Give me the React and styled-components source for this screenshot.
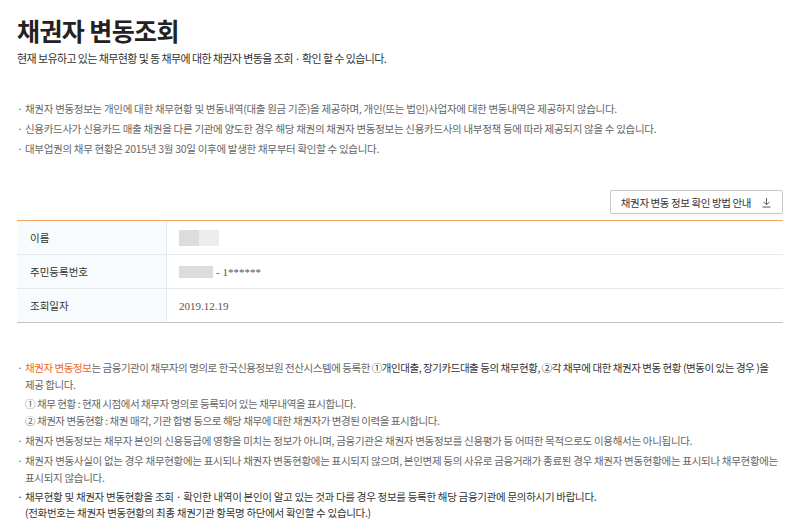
import React from "react";
import styled, { createGlobalStyle } from "styled-components";

const GlobalStyle = createGlobalStyle`
  body {
    margin: 0;
    background: #fff;
    font-family: "Noto Sans CJK KR", "Noto Sans", sans-serif;
    color: #333;
  }
  ul { margin: 0; padding: 0; list-style: none; }
`;

const Page = styled.div`
  padding: 14px 17px 0;
`;
const Title = styled.h2`
  margin: 0;
  font-size: 25px;
  font-weight: 700;
  color: #222;
  line-height: 32px;
  letter-spacing: -0.6px;
`;
const Lead = styled.p`
  margin: 4px 0 0;
  font-size: 11px;
  line-height: 16px;
  color: #333;
  letter-spacing: -0.6px;
`;
const NoteList = styled.ul`
  margin-top: ${(p) => p.$top || 0}px;
`;
const Note = styled.li`
  position: relative;
  padding-left: 8px;
  font-size: 10.5px;
  line-height: ${(p) => p.$lh || 16}px;
  margin-bottom: ${(p) => p.$gap ?? 4}px;
  color: ${(p) => (p.$strong ? "#333" : "#666")};
  letter-spacing: ${(p) => (p.$tight ? -0.45 : -0.3)}px;
  &::before {
    content: "·";
    position: absolute;
    left: 0;
    top: 0;
  }
`;
const Sub = styled.div`
  margin-top: ${(p) => p.$top || 0}px;
  color: #666;
`;
const Em = styled.span`
  color: ${(p) => (p.$orange ? "#ec6a2c" : "#333")};
`;

const Toolbar = styled.div`
  display: flex;
  justify-content: flex-end;
  margin-top: 33px;
`;
const GuideButton = styled.button`
  display: flex;
  align-items: center;
  gap: 10px;
  height: 24px;
  padding: 0 10px;
  background: #fff;
  border: 1px solid #c8c8c8;
  border-radius: 2px;
  font-family: inherit;
  font-size: 10.5px;
  color: #333;
  letter-spacing: -0.4px;
  cursor: pointer;
`;

const Table = styled.div`
  margin-top: 6px;
  border-top: 1px solid #f0a766;
  border-bottom: 1px solid #c4c4c4;
`;
const Row = styled.div`
  display: grid;
  grid-template-columns: 150px 1fr;
  height: 33px;
  & + & {
    border-top: 1px solid #e6e9ec;
  }
`;
const Label = styled.div`
  display: flex;
  align-items: center;
  padding-left: 13px;
  background: #f8fbfd;
  border-right: 1px solid #e6e9ec;
  font-size: 10.5px;
  color: #333;
`;
const Value = styled.div`
  display: flex;
  align-items: center;
  gap: 3px;
  padding-left: 12px;
  font-family: "Liberation Serif", serif;
  font-size: 11px;
  color: #555;
`;
const Blur = styled.span`
  display: inline-flex;
  height: ${(p) => p.$h}px;
  & > i {
    width: ${(p) => p.$w}px;
    background: #dcdcdc;
  }
  & > i + i {
    background: #ededed;
  }
`;

const DownIcon = () => (
  <svg width="11" height="11" viewBox="0 0 11 11" fill="none" stroke="#555" strokeWidth="1">
    <path d="M5.5 1v6.5M2.5 4.8l3 3 3-3M1.5 10h8" />
  </svg>
);

export default function App() {
  return (
    <Page>
      <GlobalStyle />
      <Title>채권자 변동조회</Title>
      <Lead>현재 보유하고 있는 채무현황 및 동 채무에 대한 채권자 변동을 조회 · 확인 할 수 있습니다.</Lead>

      <NoteList $top={35}>
        <Note>채권자 변동정보는 개인에 대한 채무현황 및 변동내역(대출 원금 기준)을 제공하며, 개인(또는 법인)사업자에 대한 변동내역은 제공하지 않습니다.</Note>
        <Note>신용카드사가 신용카드 매출 채권을 다른 기관에 양도한 경우 해당 채권의 채권자 변동정보는 신용카드사의 내부정책 등에 따라 제공되지 않을 수 있습니다.</Note>
        <Note>대부업권의 채무 현황은 2015년 3월 30일 이후에 발생한 채무부터 확인할 수 있습니다.</Note>
      </NoteList>

      <Toolbar>
        <GuideButton>
          채권자 변동 정보 확인 방법 안내
          <DownIcon />
        </GuideButton>
      </Toolbar>

      <Table>
        <Row>
          <Label>이름</Label>
          <Value>
            <Blur $w={20} $h={16}>
              <i />
              <i />
            </Blur>
          </Value>
        </Row>
        <Row>
          <Label>주민등록번호</Label>
          <Value>
            <Blur $w={34} $h={12}>
              <i />
            </Blur>
            - 1******
          </Value>
        </Row>
        <Row>
          <Label>조회일자</Label>
          <Value>2019.12.19</Value>
        </Row>
      </Table>

      <NoteList $top={36}>
        <Note $lh={17} $gap={3} $tight>
          <Em $orange>채권자 변동정보</Em>는 금융기관이 채무자의 명의로 한국신용정보원 전산시스템에 등록한{" "}
          <Em>①개인대출, 장기카드대출 등의 채무현황, ②각 채무에 대한 채권자 변동 현황 (변동이 있는 경우 )을</Em>
          <br />제공 합니다.
          <Sub $top={2}>① 채무 현황 : 현재 시점에서 채무자 명의로 등록되어 있는 채무내역을 표시합니다.</Sub>
          <Sub>② 채권자 변동현황 : 채권 매각, 기관 합병 등으로 해당 채무에 대한 채권자가 변경된 이력을 표시합니다.</Sub>
        </Note>
        <Note $lh={17} $gap={3}>채권자 변동정보는 채무자 본인의 신용등급에 영향을 미치는 정보가 아니며, 금융기관은 채권자 변동정보를 신용평가 등 어떠한 목적으로도 이용해서는 아니됩니다.</Note>
        <Note $lh={17} $gap={3}>채권자 변동사실이 없는 경우 채무현황에는 표시되나 채권자 변동현황에는 표시되지 않으며, 본인변제 등의 사유로 금융거래가 종료된 경우 채권자 변동현황에는 표시되나 채무현황에는 표시되지 않습니다.</Note>
        <Note $lh={16} $strong>
          채무현황 및 채권자 변동현황을 조회 · 확인한 내역이 본인이 알고 있는 것과 다를 경우 정보를 등록한 해당 금융기관에 문의하시기 바랍니다.
          <br />(전화번호는 채권자 변동현황의 최종 채권기관 항목명 하단에서 확인할 수 있습니다.)
        </Note>
      </NoteList>
    </Page>
  );
}
